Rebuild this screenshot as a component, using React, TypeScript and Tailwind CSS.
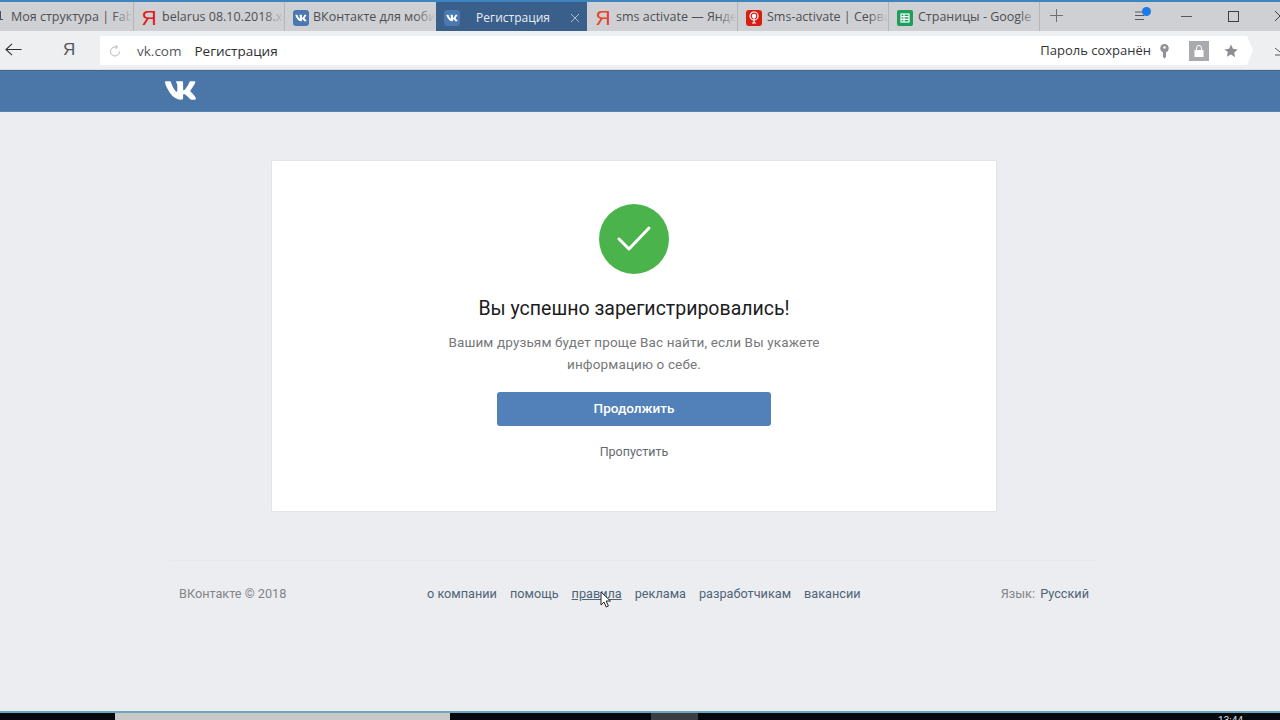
import React from "react";
import { FaVk } from "react-icons/fa";

function VkFav() {
  return (
    <span className="w-4 h-4 rounded-[3px] bg-[#4a78b0] flex items-center justify-center text-white shrink-0">
      <FaVk size={12} />
    </span>
  );
}
function Ya({ color = "#e01b1b" }: { color?: string }) {
  return (
    <span className="w-4 flex justify-center shrink-0 font-['Liberation_Sans',sans-serif] text-[21px] leading-none" style={{ color }}>
      Я
    </span>
  );
}
function Sms() {
  return (
    <span className="w-4 h-4 rounded-[3px] bg-[#d81e12] flex items-center justify-center shrink-0">
      <svg width="12" height="13" viewBox="0 0 12 13" fill="none" stroke="white" strokeWidth="1.2">
        <circle cx="6" cy="5" r="4" />
        <circle cx="6" cy="5" r="1.6" fill="white" />
        <path d="M6 6v6M4 12h4" />
      </svg>
    </span>
  );
}
function SheetIcon() {
  return (
    <span className="w-4 h-4 rounded-[2px] bg-[#1e9e5a] flex items-center justify-center shrink-0">
      <svg width="10" height="10" viewBox="0 0 10 10" fill="none" stroke="white" strokeWidth="1.2">
        <rect x="1" y="1" width="8" height="8" />
        <path d="M1 3.7h8M1 6.3h8M4 1v8" />
      </svg>
    </span>
  );
}

function Tab({ w, icon, text, pl = "pl-2", gap = "gap-[5px]", border = "border-r border-[#b4b5b8]" }: { w: string; icon: React.ReactNode; text: string; pl?: string; gap?: string; border?: string }) {
  return (
    <div className={`${w} ${pl} ${gap} ${border} h-full relative flex items-center overflow-hidden shrink-0 pt-[2px]`}>
      {icon}
      <span className="whitespace-nowrap text-[12.5px] text-[#4c4f54]">{text}</span>
      <div className="absolute right-0 top-0 bottom-0 w-5 bg-gradient-to-r from-transparent to-[#cfd0d3]" />
    </div>
  );
}

export default function App() {
  return (
    <div className="relative h-[720px] w-[1280px] overflow-hidden flex flex-col bg-[#ecedf0] font-['Roboto',sans-serif]">
      <div className="h-[31px] shrink-0 flex bg-[#cfd0d3] border-t-2 border-[#3d85c0] font-['Open_Sans',sans-serif]">
        <div className="absolute left-0 top-[11px] w-[3px] h-[9px] border-l border-b border-[#4c4f54]" />
        <Tab w="w-[134px]" pl="pl-[11px]" icon={null} text="Моя структура | Fabrika" />
        <Tab w="w-[151px]" pl="pl-[7px]" icon={<Ya />} text="belarus 08.10.2018.xlsx" />
        <Tab w="w-[151px]" pl="pl-[8px]" gap="gap-[4px]" border="" icon={<VkFav />} text="ВКонтакте для мобильных" />
        <div className="w-[151px] h-full flex items-center pl-[8px] bg-[#3a5f8a] shrink-0 pt-[2px]">
          <VkFav />
          <span className="ml-4 text-[12px] font-medium text-[#e8eef5] whitespace-nowrap">Регистрация</span>
          <svg className="ml-[20px] shrink-0" width="10" height="10" viewBox="0 0 10 10" stroke="#a9bdd3" strokeWidth="1">
            <path d="M1 1l8 8M9 1l-8 8" />
          </svg>
        </div>
        <Tab w="w-[151px]" pl="pl-[8px]" icon={<Ya color="#e8422a" />} text="sms activate — Яндекс" />
        <Tab w="w-[151px]" pl="pl-2" icon={<Sms />} text="Sms-activate | Сервис" />
        <Tab w="w-[151px]" pl="pl-2" icon={<SheetIcon />} text="Страницы - Google" />
        <svg className="ml-[10px] mt-[7px] shrink-0" width="13" height="13" viewBox="0 0 13 13" stroke="#6e7074" strokeWidth="1">
          <path d="M6.5 0v13M0 6.5h13" />
        </svg>
        <div className="relative ml-[72px] mt-[8px] w-[14px] h-[11px] shrink-0">
          <svg width="10" height="11" viewBox="0 0 10 11" stroke="#55585c" strokeWidth="1">
            <path d="M0 2h9M0 5.500h9M0 9.500h9" />
          </svg>
          <span className="absolute left-[7px] -top-[3px] w-[9px] h-[9px] rounded-full bg-[#1a7ae8]" />
        </div>
        <div className="ml-[32px] mt-[14px] w-[11px] h-px bg-[#55585c] shrink-0" />
        <div className="ml-[36px] mt-[9px] w-[11px] h-[11px] border border-[#3c3e42] shrink-0" />
        <svg className="ml-[36px] mt-[9px] shrink-0" width="10" height="10" viewBox="0 0 10 10" stroke="#3c3e42" strokeWidth="1">
          <path d="M0 0l10 10M10 0L0 10" />
        </svg>
      </div>

      <div className="h-[39px] shrink-0 flex items-center bg-[#eeeff1] border-b border-[#dcdde0] relative">
        <svg className="ml-[5px] mt-[-2px] shrink-0" width="17" height="13" viewBox="0 0 17 13" fill="none" stroke="#2e3034" strokeWidth="1.1">
          <path d="M16.500 6.500H1M7 .8L1 6.500l6 5.700" />
        </svg>
        <span className="ml-[41px] w-[10px] shrink-0 text-[17px] text-[#55585c] font-['Liberation_Sans',sans-serif]">Я</span>
        <div className="ml-[27px] mt-[1px] pt-[1px] h-[29px] w-[1153px] shrink-0 bg-white flex items-center font-['Open_Sans',sans-serif] text-[13px] [clip-path:polygon(0_0,calc(100%_-_6px)_0,100%_50%,calc(100%_-_6px)_100%,0_100%)]">
          <svg className="ml-[9px]" width="12" height="12" viewBox="0 0 12 12" fill="none" stroke="#b2b4b7" strokeWidth="1">
            <path d="M10.500 6.500A4.500 4.500 0 1 1 6 2h2M6.500 0L8.500 2 6.500 4" />
          </svg>
          <span className="ml-[16px] text-[13.5px] text-[#53565a]">vk.com</span>
          <span className="ml-[13px] text-[13.5px] text-[#2d2f33]">Регистрация</span>
          <span className="ml-auto text-[#33353a]">Пароль сохранён</span>
          <svg className="ml-[9px]" width="9" height="15" viewBox="0 0 9 15" fill="#8f9194">
            <path d="M4.500 0a4.300 4.300 0 0 1 1.500 8.300V13l-1.500 1.500L3 13V8.300A4.300 4.300 0 0 1 4.500 0z" />
            <circle cx="4.500" cy="3.500" r="1.300" fill="white" />
          </svg>
          <span className="ml-[20px] w-5 h-5 bg-[#a9aaad] flex items-center justify-center">
            <svg width="10" height="12" viewBox="0 0 10 12" fill="white">
              <rect x="0.500" y="5" width="9" height="7" />
              <path d="M2.500 5V3a2.500 2.500 0 0 1 5 0v2" fill="none" stroke="white" />
            </svg>
          </span>
          <svg className="ml-[15px] mr-[15px]" width="14" height="14" viewBox="0 0 24 24" fill="#8c8e91">
            <path d="M12 1l3.400 7.300 7.900 1-5.800 5.500 1.500 7.900L12 18l-7 3.700 1.500-7.900L.7 9.300l7.900-1z" />
          </svg>
        </div>
        <svg className="ml-[22px] mt-[2px] shrink-0" width="6" height="9" viewBox="0 0 6 9" fill="none" stroke="#55585c" strokeWidth="1">
          <path d="M0 1l5 4M0 8h6" />
        </svg>
      </div>

      <div className="h-[42px] shrink-0 bg-[#4a76a8] border-t border-[#41688f] border-b border-b-[#5c83ad] pl-[164px] pb-[2px] flex items-center">
        <FaVk size={33} color="white" />
      </div>

      <div className="flex-1 flex flex-col items-center pt-[48px]">
        <div className="ml-[-12px] w-[726px] h-[352px] shrink-0 bg-white border border-[#e3e4e8] rounded-[2px] flex flex-col items-center pt-[43px]">
          <div className="w-[70px] h-[70px] rounded-full bg-[#4bb34b] flex items-center justify-center">
            <svg width="36" height="28" viewBox="0 0 36 28" fill="none" stroke="white" strokeWidth="3" strokeLinecap="round" strokeLinejoin="round">
              <path d="M3 14l10 10L33 3" />
            </svg>
          </div>
          <div className="mt-[21px] text-[19.5px] leading-[28px] text-[#1c1c1e]">Вы успешно зарегистрировались!</div>
          <div className="mt-[8px] w-[400px] text-center text-[13.5px] leading-[22px] text-[#76787a] tracking-[0.13px]">
            Вашим друзьям будет проще Вас найти, если Вы укажете информацию о себе.
          </div>
          <div className="mt-[17px] w-[274px] h-[34px] pb-[2px] rounded-[3px] bg-[#5181b8] text-white text-[13.5px] font-medium flex items-center justify-center">
            Продолжить
          </div>
          <div className="mt-[18px] text-[12.5px] leading-[16px] text-[#656a70]">Пропустить</div>
        </div>

        <div className="mt-[48px] w-[930px] ml-[-12px] border-t border-[#e7e8ec] pt-[24px] flex items-center px-[10px] text-[12.7px] leading-[18px]">
          <span className="w-[248px] text-[#828587]">ВКонтакте © 2018</span>
          <div className="flex gap-[13px] text-[#4f6478]">
            <span>о компании</span>
            <span>помощь</span>
            <span className="underline">правила</span>
            <span>реклама</span>
            <span>разработчикам</span>
            <span>вакансии</span>
          </div>
          <span className="ml-auto text-[#828587]">
            Язык: <span className="text-[#4f6478] ml-[2px]">Русский</span>
          </span>
        </div>
      </div>

      <div className="h-[9px] shrink-0 bg-[#05090f] border-t-2 border-[#6aa7b8] flex relative overflow-hidden">
        <div className="ml-[115px] w-[335px] bg-[#c8c8c8]" />
        <div className="ml-[201px] w-[47px] bg-[#3a3d42]" />
        <span className="absolute right-[37px] top-[3px] text-[10px] leading-[10px] text-[#dddddd]">13:44</span>
      </div>

      <svg className="absolute left-[600px] top-[591px]" width="12" height="18" viewBox="0 0 12 18" fill="white" stroke="#222" strokeWidth="1">
        <path d="M1 1v13l3-3 2.200 5 2.200-1-2.200-5h4.300z" />
      </svg>
    </div>
  );
}
